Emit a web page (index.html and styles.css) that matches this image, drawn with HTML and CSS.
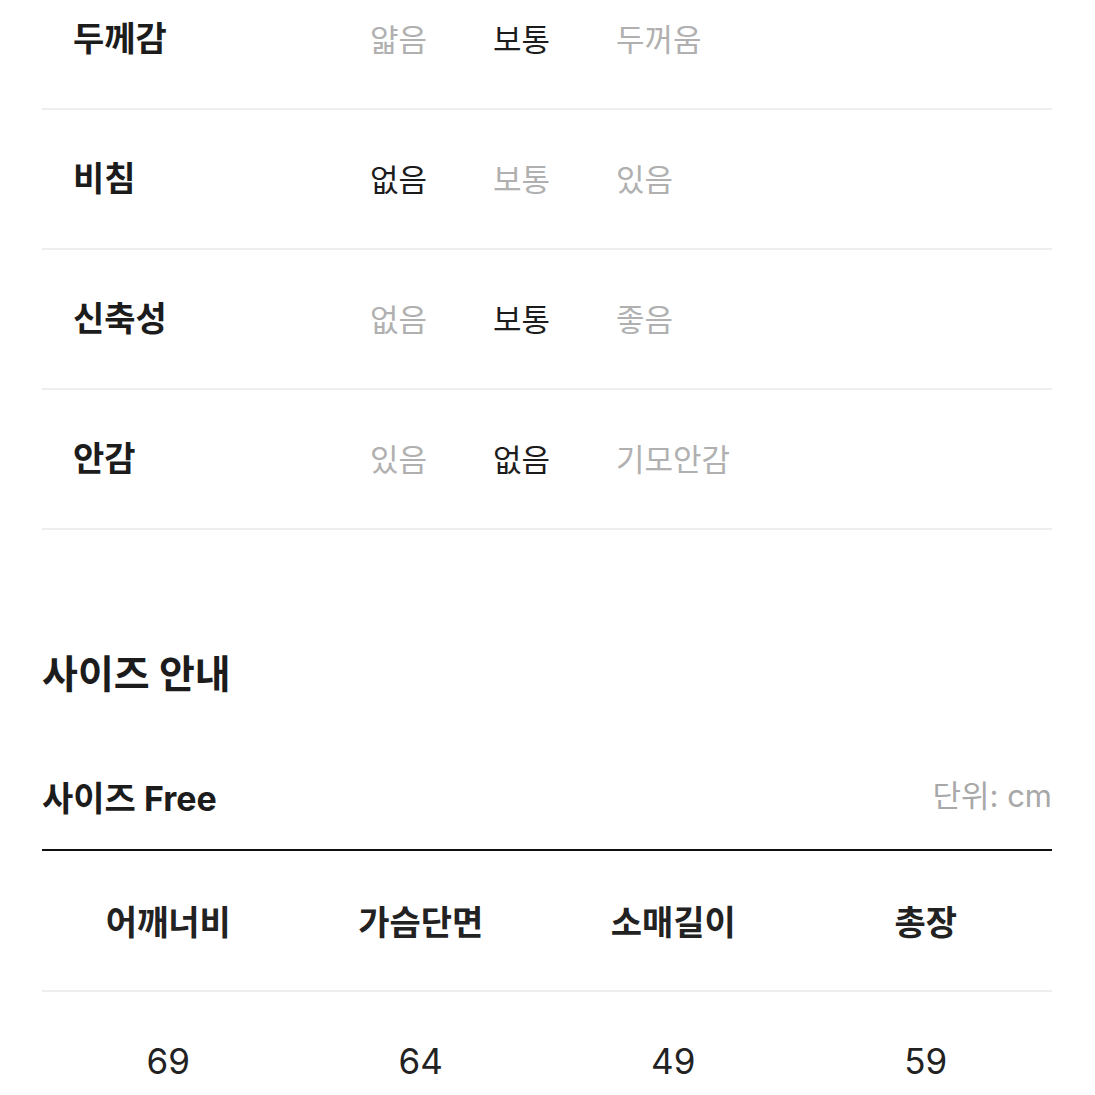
FILE: index.html
```html
<!DOCTYPE html>
<html lang="ko">
<head>
    <meta charset="UTF-8">
    <meta name="viewport" content="width=device-width, initial-scale=1.0">
    <title>상품 정보</title>
    <link rel="stylesheet" href="styles.css">
</head>
<body>
<div class="page">
    <div class="spec-list">
        <div class="spec-row">
            <span class="spec-label">두께감</span>
            <span class="spec-option">얇음</span>
            <span class="spec-option is-on">보통</span>
            <span class="spec-option">두꺼움</span>
        </div>
        <div class="spec-row">
            <span class="spec-label">비침</span>
            <span class="spec-option is-on">없음</span>
            <span class="spec-option">보통</span>
            <span class="spec-option">있음</span>
        </div>
        <div class="spec-row">
            <span class="spec-label">신축성</span>
            <span class="spec-option">없음</span>
            <span class="spec-option is-on">보통</span>
            <span class="spec-option">좋음</span>
        </div>
        <div class="spec-row">
            <span class="spec-label">안감</span>
            <span class="spec-option">있음</span>
            <span class="spec-option is-on">없음</span>
            <span class="spec-option">기모안감</span>
        </div>
    </div>

    <h2 class="size-title">사이즈 안내</h2>

    <div class="size-head">
        <span class="size-name">사이즈 Free</span>
        <span class="size-unit">단위: cm</span>
    </div>
    <div class="size-table">
        <div class="size-th">어깨너비</div>
        <div class="size-th">가슴단면</div>
        <div class="size-th">소매길이</div>
        <div class="size-th">총장</div>
        <div class="size-td">69</div>
        <div class="size-td">64</div>
        <div class="size-td">49</div>
        <div class="size-td">59</div>
    </div>
</div>
</body>
</html>
```

FILE: styles.css
```css
html, body {
    margin: 0;
    background: #fff;
}
body {
    font-family: Inter, "Noto Sans CJK KR", sans-serif;
    color: #1c1c1c;
    overflow: hidden;
}
.page {
    padding: 0 43px 0 42px;
}

/* 소재 정보 */
.spec-list {
    margin-top: -30px;
}
.spec-row {
    display: flex;
    align-items: center;
    height: 138px;
    padding-left: 31px;
    border-bottom: 2px solid #eeeeee;
}
.spec-label {
    width: 297px;
    font-size: 34px;
    font-weight: 700;
    line-height: 1;
}
.spec-option {
    width: 123px;
    font-size: 31px;
    line-height: 1;
    color: #b0b0b0;
}
.spec-option.is-on {
    color: #1c1c1c;
}

/* 사이즈 */
.size-title {
    margin: 119px 0 0;
    font-size: 39px;
    font-weight: 700;
    line-height: 50px;
}
.size-head {
    display: flex;
    justify-content: space-between;
    align-items: baseline;
    margin-top: 78px;
    padding-bottom: 27px;
    border-bottom: 2px solid #111;
}
.size-name {
    font-size: 34px;
    font-weight: 700;
    line-height: 44px;
}
.size-unit {
    font-size: 31px;
    line-height: 44px;
    color: #a8a8a8;
    position: relative;
    top: -4px;
}
.size-table {
    display: grid;
    grid-template-columns: repeat(4, 1fr);
}
.size-th {
    height: 139px;
    display: flex;
    align-items: center;
    justify-content: center;
    font-size: 34px;
    font-weight: 700;
    color: #222;
    border-bottom: 2px solid #eeeeee;
}
.size-td {
    height: 138px;
    display: flex;
    align-items: center;
    justify-content: center;
    font-size: 35px;
    color: #222;
}
```
